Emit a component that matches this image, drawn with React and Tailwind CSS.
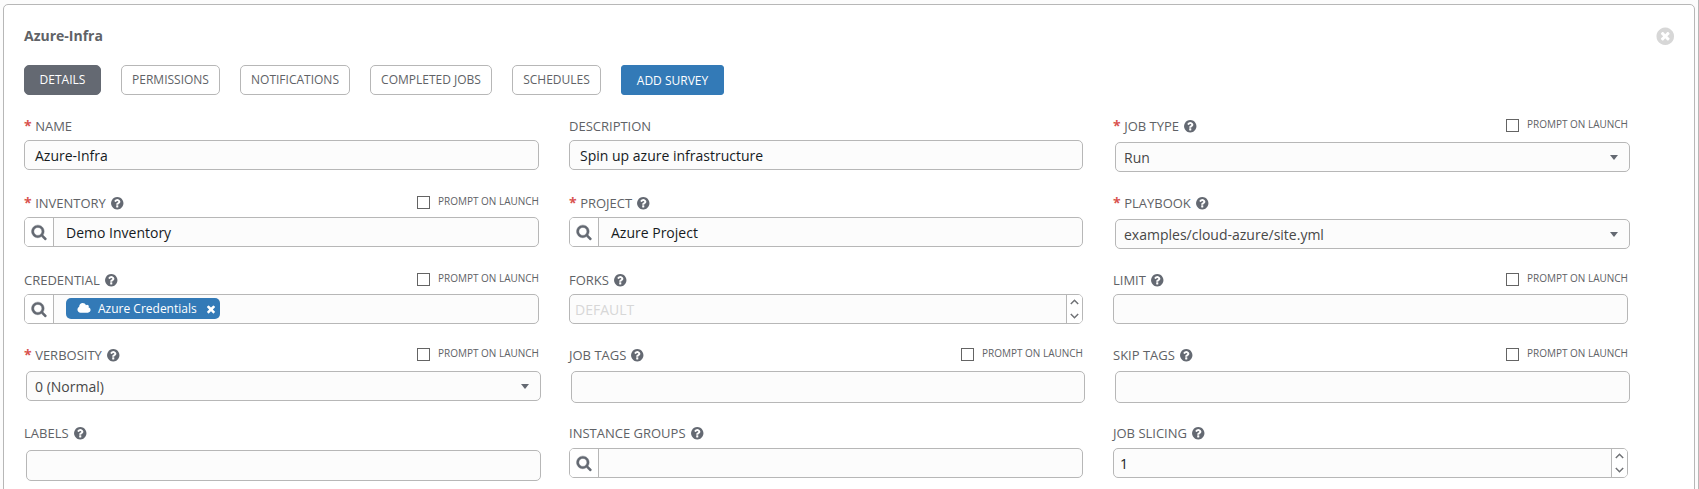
import React from "react";

const CIRCLE =
  "m387-226q0 209-103 385.5t-279.5 279.5-385.5 103-385.5-103-279.5-279.5-103-385.5 103-385.5 279.5-279.5 385.5-103 385.5 103 279.5 279.5 103 385.5z";

const PATHS = {
  search:
    "M1216 832q0-185-131.5-316.5t-316.5-131.5-316.5 131.5-131.5 316.5 131.5 316.5 316.5 131.5 316.5-131.5 131.5-316.5zm512 832q0 52-38 90t-90 38q-54 0-90-38l-343-342q-179 124-399 124-143 0-273.5-55.5t-225-150-150-225-55.5-273.5 55.5-273.5 150-225 225-150 273.5-55.5 273.5 55.5 225 150 150 225 55.5 273.5q0 220-124 399l343 343q37 37 37 90z",
  help:
    "M1024 1376v-192q0-14-9-23t-23-9h-192q-14 0-23 9t-9 23v192q0 14 9 23t23 9h192q14 0 23-9t9-23zm256-672q0-88-55.5-163t-138.5-116-170-41q-243 0-371 213-15 24 8 42l132 100q7 6 19 6 16 0 25-12 53-68 86-92 34-24 86-24 48 0 85.5 26t37.5 59q0 38-20 61t-68 45q-63 28-115.5 86.5t-52.5 125.5v36q0 14 9 23t23 9h192q14 0 23-9t9-23q0-19 21.5-49.5t54.5-49.5q32-18 49-28.5t46-35 44.5-48 28-60.5 12.5-81zm384 192q0 209-103 385.5t-279.5 279.5-385.5 103-385.5-103-279.5-279.5-103-385.5 103-385.5 279.5-279.5 385.5-103 385.5 103 279.5 279.5 103 385.5z",
  times:
    "M1490 1322q0 40-28 68l-136 136q-28 28-68 28t-68-28l-294-294-294 294q-28 28-68 28t-68-28l-136-136q-28-28-28-68t28-68l294-294-294-294q-28-28-28-68t28-68l136-136q28-28 68-28t68 28l294 294 294-294q28-28 68-28t68 28l136 136q28 28 28 68t-28 68l-294 294 294 294q28 28 28 68z",
  close:
    "M1277 1122q0-26-19-45l-181-181 181-181q19-19 19-45 0-27-19-46l-90-90q-19-19-46-19-26 0-45 19l-181 181-181-181q-19-19-45-19-27 0-46 19l-90 90q-19 19-19 46 0 26 19 45l181 181-181 181q-19 19-19 45 0 27 19 46l90 90q19 19 46 19 26 0 45-19l181-181 181 181q19 19 45 19 27 0 46-19l90-90q19-19 19-46z" +
    CIRCLE,
};

function Icon({ name, viewBox = "0 0 1792 1792", className }) {
  return (
    <svg viewBox={viewBox} fill="currentColor" className={"shrink-0 " + className}>
      <path d={PATHS[name]} />
    </svg>
  );
}

function Cloud() {
  return (
    <svg viewBox="0 128 2048 1536" fill="currentColor" className="h-[10.5px] w-[14px] shrink-0">
      <path d="M1984 1152q0 159-112.5 271.5t-271.5 112.5h-1088q-185 0-316.5-131.5t-131.5-316.5q0-132 71-241.5t187-163.5q-2-28-2-43 0-212 150-362t362-150q158 0 286.5 88t187.5 230q70-62 166-62 106 0 181 75t75 181q0 75-41 138 129 30 213 134.5t84 239.5z" />
    </svg>
  );
}

function Field({ label, required, help, prompt, raised, children }) {
  return (
    <div className="flex min-w-0 flex-col">
      <div className={"flex h-[27px] shrink-0 items-center text-[13px] leading-[20px] text-[#606266] " + (raised ? "pb-[3px]" : "pb-px")}>
        {required && <span className="mr-[3.5px] text-[14px] font-bold text-[#d9534f]">*</span>}
        <span>{label}</span>
        {help && <Icon name="help" className="ml-[4px] size-[14.5px] text-[#646972]" />}
        {prompt && (
          <label className="ml-auto flex items-center text-[10px]">
            <span className="mt-[-1px] mr-[7.5px] size-[13px] border border-[#646464] bg-white" />
            <span className="-mt-[4px]">PROMPT ON LAUNCH</span>
          </label>
        )}
      </div>
      {children}
    </div>
  );
}

const BOX = "flex shrink-0 items-center overflow-hidden rounded-[5px] border border-[#b7b7b7] bg-[#fcfcfc] text-[14px] ";

function Text({ value }) {
  return <div className={BOX + "h-[30px] px-[10px] text-[#161b1f]"}>{value}</div>;
}

function Lookup({ children }) {
  return (
    <div className={BOX + "h-[30px] text-[#161b1f]"}>
      <span className="flex h-full w-[29px] items-center justify-center border-r border-[#b7b7b7] bg-white text-[#646972]">
        <Icon name="search" className="size-[16px] overflow-visible stroke-current stroke-[50]" />
      </span>
      <span className="flex items-center pl-[12px]">{children}</span>
    </div>
  );
}

function Select({ value }) {
  return (
    <div className={BOX + "mt-[2px] -mr-[2px] ml-[2px] h-[30px] justify-between pr-[11px] pl-[8px] text-[#484848]"}>
      <span>{value}</span>
      <svg viewBox="0 0 8 5" className="h-[5px] w-[8px] fill-[#646972]">
        <path d="M0 0h8L4 5z" />
      </svg>
    </div>
  );
}

function Tags({ className }) {
  return <div className={BOX + "mt-[2px] -mr-[2px] ml-[2px] " + className} />;
}

function Chevron({ d }) {
  return (
    <svg viewBox="0 0 9 6" className="h-[6px] w-[9px] fill-none stroke-[#707276] stroke-[1.5]">
      <path d={d} />
    </svg>
  );
}

function Spinner({ value, placeholder }) {
  return (
    <div className={BOX + "h-[30px] justify-between pl-[5px]"}>
      {value ? <span className="pl-px text-[#161b1f]">{value}</span> : <span className="pt-px text-[#d7d7d7]">{placeholder}</span>}
      <span className="flex h-full w-[16px] flex-col items-center justify-between border-l border-[#b7b7b7] bg-white py-[4px]">
        <Chevron d="M.8 5 4.5 1.3 8.2 5" />
        <Chevron d="M.8 1 4.5 4.7 8.2 1" />
      </span>
    </div>
  );
}

const TABS = [
  ["DETAILS", "w-[77px] rounded-[5px] border-[#646972] bg-[#646972] text-white"],
  ["PERMISSIONS", "w-[99px] rounded-[5px] border-[#b7b7b7] text-[#606266]"],
  ["NOTIFICATIONS", "w-[110px] rounded-[5px] border-[#b7b7b7] text-[#606266]"],
  ["COMPLETED JOBS", "w-[122px] rounded-[5px] border-[#b7b7b7] text-[#606266]"],
  ["SCHEDULES", "w-[89px] rounded-[5px] border-[#b7b7b7] text-[#606266]"],
  ["ADD SURVEY", "w-[103px] rounded-[3px] border-[#337ab7] bg-[#337ab7] pt-[2px] text-white"],
];

export default function App() {
  return (
    <div className="h-[489px] w-[1699px] overflow-hidden border-r border-[#b7b7b7] bg-[#fcfcfc] pt-[4px] pl-[3px] font-['Open_Sans',sans-serif]">
      <div className="h-[520px] w-[1692px] rounded-[5px] border border-[#b7b7b7] bg-white px-[20px]">
        <div className="flex h-[60px] items-center justify-between">
          <h1 className="text-[14px] font-bold text-[#606266]">Azure-Infra</h1>
          <Icon name="close" className="mt-[2px] -mr-[1.25px] size-[20.5px] text-[#d7d7d7]" />
        </div>
        <div className="flex gap-[20px]">
          {TABS.map(([name, cls]) => (
            <button key={name} className={"flex h-[30px] items-center justify-center border pb-px text-[12px] whitespace-nowrap " + cls}>
              {name}
            </button>
          ))}
        </div>
        <div className="mt-[18px] grid grid-cols-[515px_514px_515px] grid-rows-[77px_77px_75px_79px_60px] gap-x-[30px]">
          <Field label="NAME" required><Text value="Azure-Infra" /></Field>
          <Field label="DESCRIPTION"><Text value="Spin up azure infrastructure" /></Field>
          <Field label="JOB TYPE" required help prompt><Select value="Run" /></Field>

          <Field label="INVENTORY" required help prompt><Lookup>Demo Inventory</Lookup></Field>
          <Field label="PROJECT" required help><Lookup>Azure Project</Lookup></Field>
          <Field label="PLAYBOOK" required help><Select value="examples/cloud-azure/site.yml" /></Field>

          <Field label="CREDENTIAL" help prompt>
            <Lookup>
              <span className="-mt-px flex h-[21px] w-[154px] items-center rounded-[5px] bg-[#337ab7] pl-[11px] text-[12px] text-white">
                <Cloud />
                <span className="ml-[7px]">Azure Credentials</span>
                <Icon name="times" className="ml-[8px] size-[12px]" />
              </span>
            </Lookup>
          </Field>
          <Field label="FORKS" help><Spinner placeholder="DEFAULT" /></Field>
          <Field label="LIMIT" help prompt><Text /></Field>

          <Field label="VERBOSITY" required help prompt><Select value="0 (Normal)" /></Field>
          <Field label="JOB TAGS" help prompt><Tags className="h-[32px]" /></Field>
          <Field label="SKIP TAGS" help prompt><Tags className="h-[32px]" /></Field>

          <Field label="LABELS" help raised><Tags className="h-[31px]" /></Field>
          <Field label="INSTANCE GROUPS" help raised><Lookup /></Field>
          <Field label="JOB SLICING" help raised><Spinner value="1" /></Field>
        </div>
      </div>
    </div>
  );
}
